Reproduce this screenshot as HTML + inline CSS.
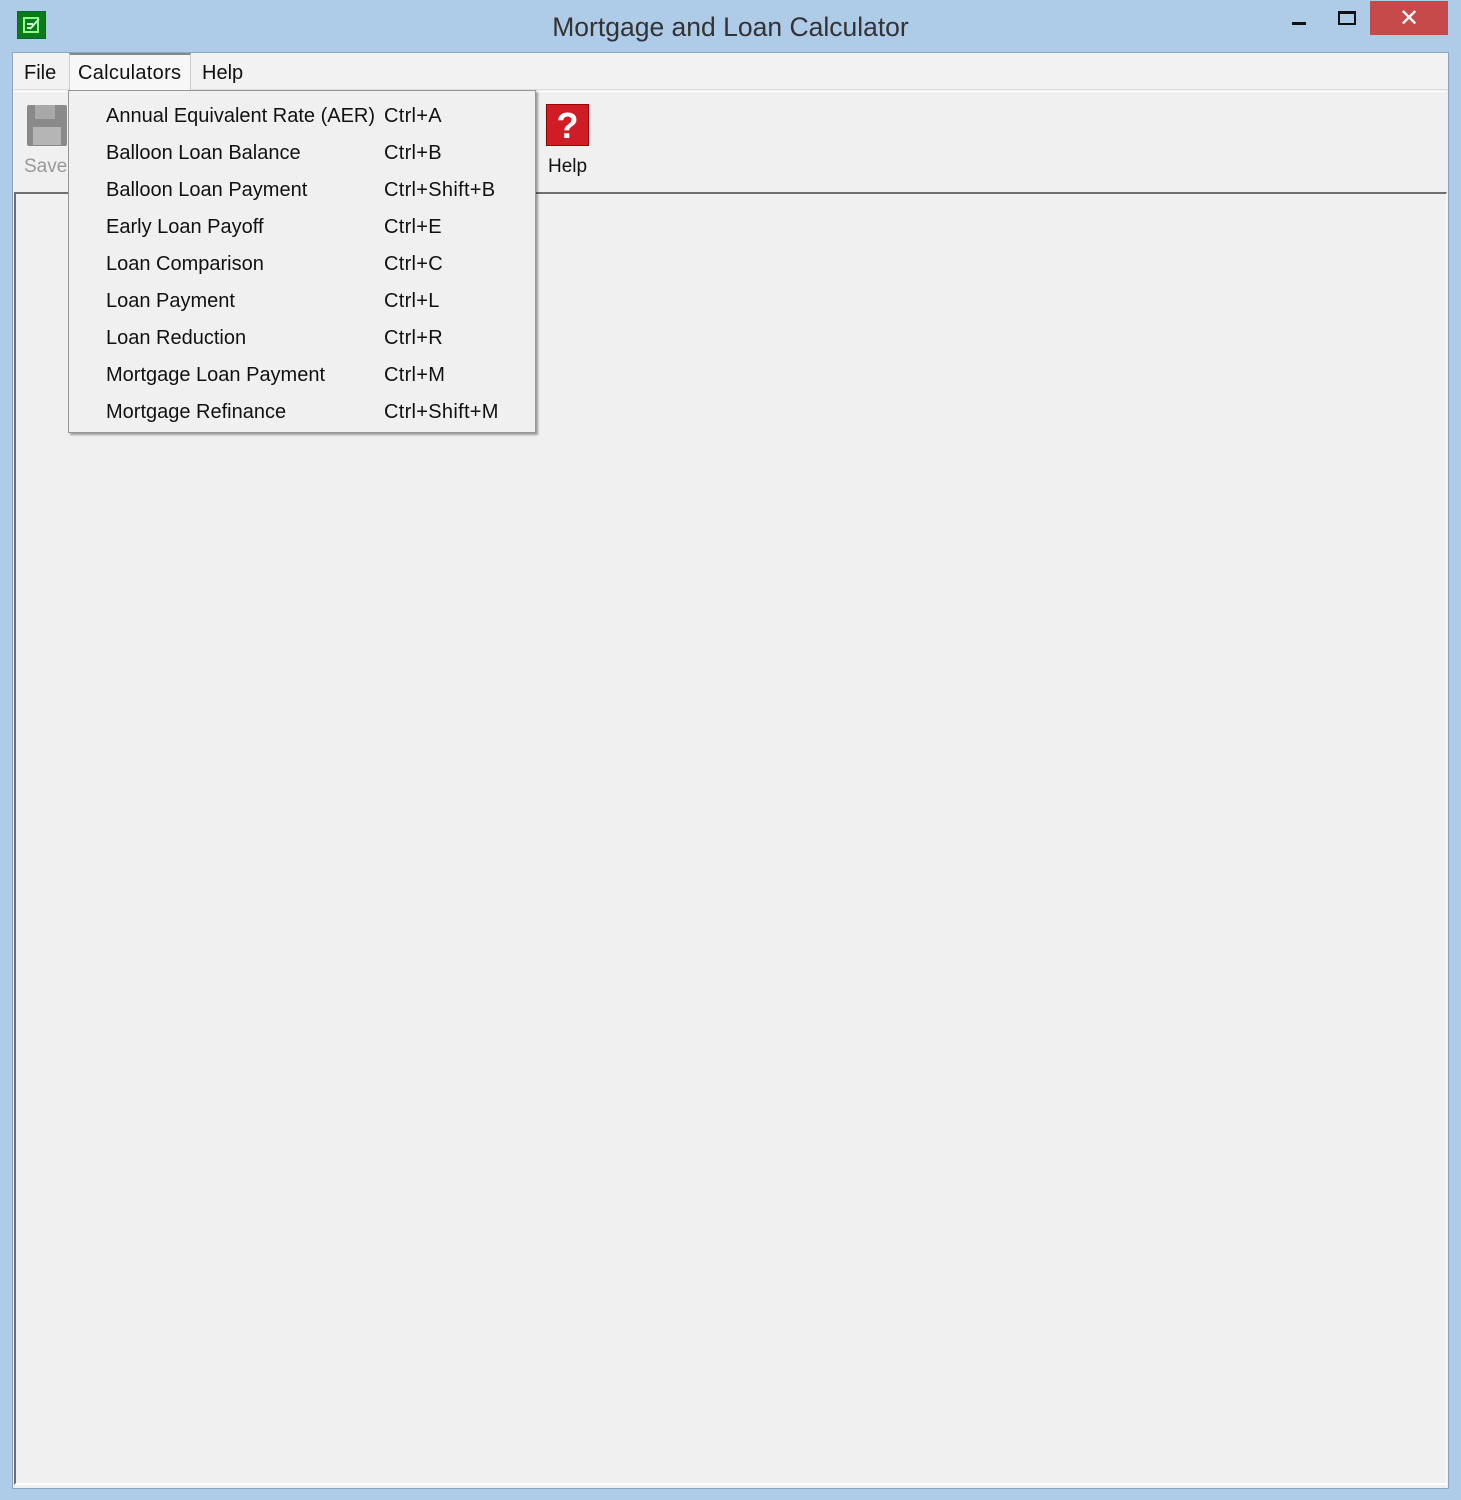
<!DOCTYPE html>
<html><head><meta charset="utf-8"><style>
*{margin:0;padding:0;box-sizing:border-box}
body{width:1461px;height:1500px;background:#aecbe8;font-family:"Liberation Sans","DejaVu Sans",sans-serif;position:relative;overflow:hidden}
.a{position:absolute}
.title{left:0;top:12px;width:1461px;text-align:center;font-size:26.5px;color:#333}
.client{left:12px;top:52px;width:1437px;height:1437px;background:#f0f0f0;border:1px solid #8aa6c4}
.menu span{position:absolute;top:62px;font-size:20px;color:#111}
.mdi{left:14px;top:192px;width:1433px;height:1293px;border-top:2px solid #6f6f6f;border-left:2px solid #6f6f6f;border-right:1px solid #fff;border-bottom:2px solid #fff;background:#f0f0f0}
.dd{left:68px;top:90px;width:468px;height:343px;background:#f0f0f0;border:1px solid #979797;box-shadow:2px 2px 2px rgba(0,0,0,.35)}
.it{position:absolute;left:37px;font-size:20px;color:#111;white-space:nowrap}
.sc{position:absolute;left:315px;font-size:20px;color:#111;white-space:nowrap;letter-spacing:0.3px}
</style></head><body>
<div class="a" style="left:17px;top:11px;width:29px;height:28px;background:#0a7a1a;border:1px solid #064;"><svg width="27" height="26"><rect x="6" y="6" width="14" height="14" fill="none" stroke="#8f8" stroke-width="2"/><path d="M9 12h6M9 16h4M12 17l9-10" stroke="#cfc" stroke-width="2" fill="none"/></svg></div>
<div class="a title">Mortgage and Loan Calculator</div>
<div class="a" style="left:1292px;top:22px;width:14px;height:3px;background:#111"></div>
<div class="a" style="left:1338px;top:11px;width:18px;height:14px;border:2px solid #111;border-top-width:3px"></div>
<div class="a" style="left:1370px;top:1px;width:78px;height:34px;background:#c74a4a;color:#fff;text-align:center;font-size:24px;line-height:36px;font-weight:bold">✕</div>
<div class="a client"></div>
<div class="a" style="left:13px;top:53px;width:1435px;height:37px;background:#f2f2f2;border-bottom:1px solid #ddd"></div>
<div class="a" style="left:69px;top:53px;width:122px;height:37px;background:#f7f7f7;border:1px solid #ccc;border-top:2px solid #888;border-bottom:none"></div>
<div class="menu"><span style="left:24px">File</span><span style="left:78px;letter-spacing:0.3px">Calculators</span><span style="left:202px">Help</span></div>
<div class="a" style="left:13px;top:91px;width:1433px;height:101px;border-top:1px solid #fff;background:#f0f0f0"></div>
<div class="a" style="left:27px;top:105px;width:40px;height:41px;background:#8a8a8a;border-radius:2px"><div class="a" style="left:8px;top:0;width:20px;height:14px;background:#a8a8a8"></div><div class="a" style="left:6px;top:22px;width:28px;height:18px;background:#b5b5b5"></div></div>
<div class="a" style="left:24px;top:156px;font-size:19px;color:#999">Save</div>
<div class="a" style="left:546px;top:104px;width:43px;height:42px;background:#d01c24;border:1px solid #900;color:#fff;font-weight:bold;font-size:36px;text-align:center;line-height:42px">?</div>
<div class="a" style="left:548px;top:156px;font-size:19px;color:#111">Help</div>
<div class="a mdi"></div>
<div class="a dd">
<div class="it" style="top:14px">Annual Equivalent Rate (AER)</div><div class="sc" style="top:14px">Ctrl+A</div>
<div class="it" style="top:51px">Balloon Loan Balance</div><div class="sc" style="top:51px">Ctrl+B</div>
<div class="it" style="top:88px">Balloon Loan Payment</div><div class="sc" style="top:88px">Ctrl+Shift+B</div>
<div class="it" style="top:125px">Early Loan Payoff</div><div class="sc" style="top:125px">Ctrl+E</div>
<div class="it" style="top:162px">Loan Comparison</div><div class="sc" style="top:162px">Ctrl+C</div>
<div class="it" style="top:199px">Loan Payment</div><div class="sc" style="top:199px">Ctrl+L</div>
<div class="it" style="top:236px">Loan Reduction</div><div class="sc" style="top:236px">Ctrl+R</div>
<div class="it" style="top:273px">Mortgage Loan Payment</div><div class="sc" style="top:273px">Ctrl+M</div>
<div class="it" style="top:310px">Mortgage Refinance</div><div class="sc" style="top:310px">Ctrl+Shift+M</div>
</div>
</body></html>
